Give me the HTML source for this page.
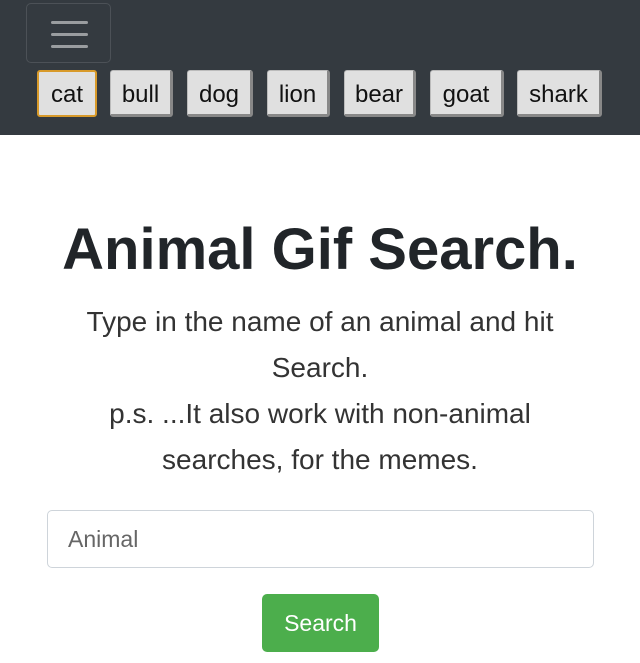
<!DOCTYPE html>
<html><head><style>
body{margin:0;width:640px;height:663px;overflow:hidden;background:#fff;font-family:"Liberation Sans",sans-serif;color:#212529}
.nav{position:absolute;left:0;top:0;width:640px;height:135px;background:#343a40}
.tog{position:absolute;left:26px;top:3px;width:83px;height:58px;border:1px solid rgba(255,255,255,.12);border-radius:5px}
.tog i{position:absolute;left:24px;width:37px;height:3px;background:#9a9da0;border-radius:2px}
.b{position:absolute;top:70px;height:47px;background:#e0e0e0;border:1px solid #bbb;border-right:3px solid #888;border-bottom:3px solid #888;border-radius:3px;box-sizing:border-box;font-size:24px;line-height:48px;text-align:center;color:#111}
h1{position:absolute;top:215px;left:0;width:640px;margin:0;text-align:center;font-size:58px;font-weight:bold;line-height:70px}
p{position:absolute;top:299px;left:60px;width:520px;margin:0;text-align:center;font-size:28px;line-height:46px;color:#333}
.in{position:absolute;left:47px;top:510px;width:547px;height:58px;border:1px solid #ced4da;border-radius:5px;box-sizing:border-box;font-size:23px;color:#666;padding-left:20px;line-height:56px}
.s{position:absolute;left:262px;top:594px;width:117px;height:58px;background:#4cae4c;border-radius:5px;color:#fff;font-size:23px;text-align:center;line-height:58px}
</style></head><body>
<div class="nav">
<div class="tog"><i style="top:17px"></i><i style="top:29px"></i><i style="top:41px"></i></div>
<div class="b" style="left:37px;width:60px;border:2px solid #d89a2a;line-height:45px">cat</div>
<div class="b" style="left:110px;width:63px">bull</div>
<div class="b" style="left:187px;width:66px">dog</div>
<div class="b" style="left:267px;width:63px">lion</div>
<div class="b" style="left:344px;width:72px">bear</div>
<div class="b" style="left:430px;width:74px">goat</div>
<div class="b" style="left:517px;width:85px">shark</div>
</div>
<h1>Animal Gif Search.</h1>
<p>Type in the name of an animal and hit Search.<br>p.s. ...It also work with non-animal searches, for the memes.</p>
<div class="in">Animal</div>
<div class="s">Search</div>
</body></html>
